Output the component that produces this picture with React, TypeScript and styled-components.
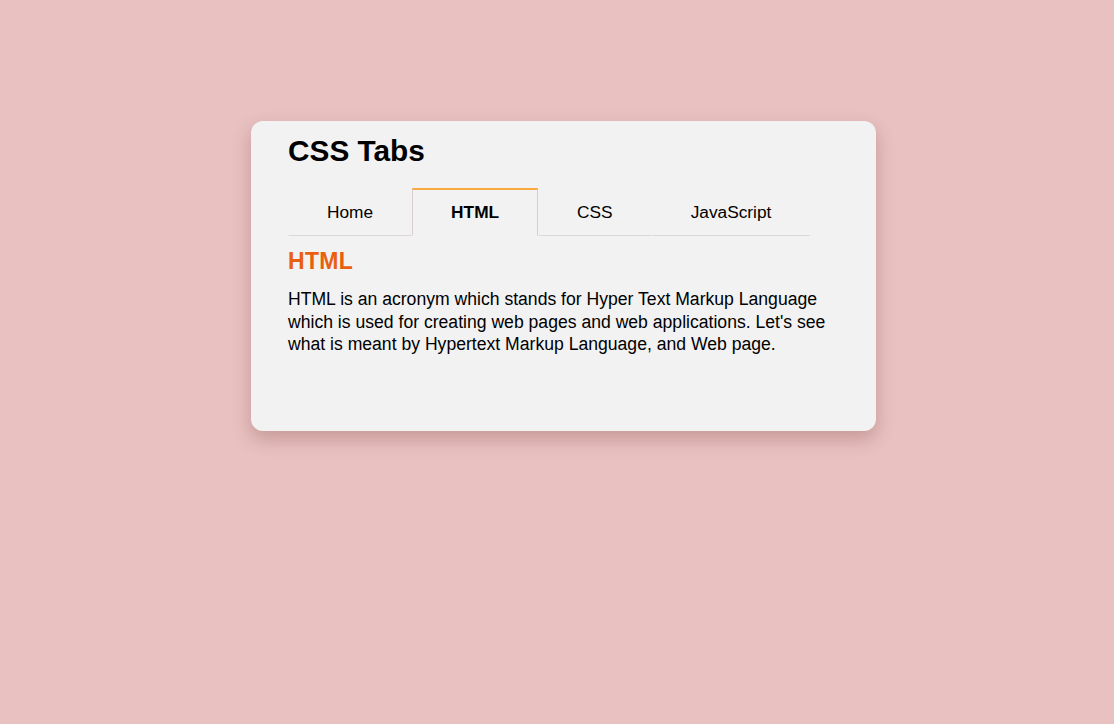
import React, { useState } from "react";
import styled, { createGlobalStyle } from "styled-components";

const Global = createGlobalStyle`
  html, body { margin: 0; padding: 0; }
  body {
    background: #e8c1c0;
    font-family: "Liberation Sans", Arial, sans-serif;
    color: #000;
  }
`;

const Page = styled.div`
  min-height: 724px;
  display: flex;
  justify-content: center;
  align-items: flex-start;
  padding: 121px 0 0 13px;
  box-sizing: border-box;
`;

const Card = styled.div`
  width: 625px;
  height: 310px;
  box-sizing: border-box;
  padding: 13px 37px 0 37px;
  background: #f2f2f2;
  border-radius: 12px;
  box-shadow: 0 8px 18px rgba(120, 60, 60, 0.3);
`;

const Title = styled.h1`
  margin: 0;
  font-size: 29.8px;
  font-weight: 700;
  line-height: 33px;
`;

const TabList = styled.div`
  display: flex;
  margin-top: 21px;
`;

const Tab = styled.button<{ $active: boolean }>`
  font-family: "Liberation Sans", Arial, sans-serif;
  font-size: 17.3px;
  line-height: 20px;
  color: #000;
  background: transparent;
  padding: 12px 38px 13px;
  margin: 0;
  cursor: pointer;
  font-weight: ${(p) => (p.$active ? 700 : 400)};
  border: 1px solid ${(p) => (p.$active ? "#d8cccc" : "transparent")};
  border-top: 2px solid ${(p) => (p.$active ? "#f9aa3c" : "transparent")};
  border-bottom: 1px solid ${(p) => (p.$active ? "transparent" : "#dcd6d6")};
`;

const Heading = styled.h2`
  margin: 12px 0 0;
  font-size: 23px;
  line-height: 27px;
  font-weight: 700;
  color: #e8600f;
  letter-spacing: 0.3px;
`;

const Text = styled.p`
  margin: 13px 0 0;
  font-size: 17.6px;
  line-height: 22.5px;
`;

const tabs = [
  {
    name: "Home",
    body: "Welcome to the CSS Tabs demo. Pick a tab to read about a web technology.",
  },
  {
    name: "HTML",
    body: "HTML is an acronym which stands for Hyper Text Markup Language which is used for creating web pages and web applications. Let's see what is meant by Hypertext Markup Language, and Web page.",
  },
  {
    name: "CSS",
    body: "CSS stands for Cascading Style Sheets. It describes how HTML elements are to be displayed on screen.",
  },
  {
    name: "JavaScript",
    body: "JavaScript is the programming language of the Web, used to make pages interactive.",
  },
];

export default function App() {
  const [active, setActive] = useState(1);
  const cur = tabs[active];
  return (
    <>
      <Global />
      <Page>
        <Card>
          <Title>CSS Tabs</Title>
          <TabList>
            {tabs.map((t, i) => (
              <Tab key={t.name} $active={i === active} onClick={() => setActive(i)}>
                {t.name}
              </Tab>
            ))}
          </TabList>
          <Heading>{cur.name}</Heading>
          <Text>{cur.body}</Text>
        </Card>
      </Page>
    </>
  );
}
